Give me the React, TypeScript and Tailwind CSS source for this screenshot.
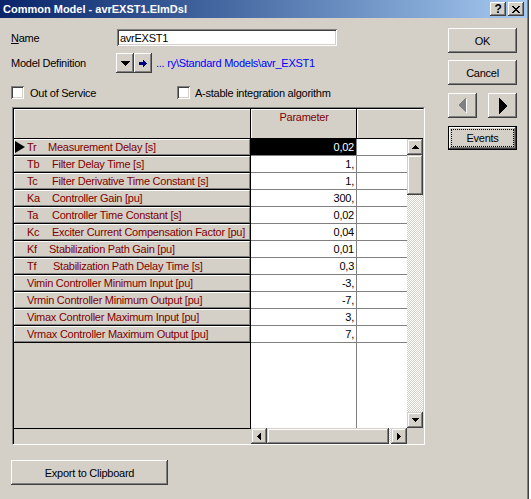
import React from "react";

const RAISED =
  "shadow-[inset_-1px_-1px_0_#404040,inset_1px_1px_0_#ffffff,inset_-2px_-2px_0_#808080]";
const SCROLLBTN =
  "shadow-[inset_-1px_-1px_0_#404040,inset_1px_1px_0_#d4d0c8,inset_-2px_-2px_0_#808080,inset_2px_2px_0_#ffffff]";
const SUNKEN =
  "shadow-[inset_1px_1px_0_#808080,inset_-1px_-1px_0_#ffffff,inset_2px_2px_0_#404040,inset_-2px_-2px_0_#d4d0c8]";
const CHECKER =
  "bg-[repeating-conic-gradient(#d4d0c8_0%_25%,#ffffff_0%_50%)] bg-[length:2px_2px]";

function Pix({ rows, color }: { rows: string[]; color: string }) {
  const h = rows.length;
  const w = rows[0].length;
  return (
    <svg width={w} height={h} shapeRendering="crispEdges">
      {rows.flatMap((r, y) =>
        [...r].map((c, x) =>
          c === "x" ? (
            <rect key={`${x}-${y}`} x={x} y={y} width={1} height={1} fill={color} />
          ) : null
        )
      )}
    </svg>
  );
}

const UP = ["...x...", "..xxx..", ".xxxxx.", "xxxxxxx"];
const DOWN = ["xxxxxxx", ".xxxxx.", "..xxx..", "...x..."];
const LEFT = ["...x", "..xx", ".xxx", "xxxx", ".xxx", "..xx", "...x"];
const RIGHT = ["x...", "xx..", "xxx.", "xxxx", "xxx.", "xx..", "x..."];
const DROP = ["xxxxxxxxx", ".xxxxxxx.", "..xxxxx..", "...xxx...", "....x...."];
const GOTO = ["....x...", "....xx..", "xxxxxxx.", "xxxxxxxx", "xxxxxxx.", "....xx..", "....x..."];
const CLOSE = ["xx....xx", ".xx..xx.", "..xxxx..", "...xx...", "..xxxx..", ".xx..xx.", "xx....xx"];

type Row = { sym: string; sw: string; desc: string; val: string };

const rows: Row[] = [
  { sym: "Tr", sw: "w-[21px]", desc: "Measurement Delay [s]", val: "0,02" },
  { sym: "Tb", sw: "w-[25px]", desc: "Filter Delay Time [s]", val: "1," },
  { sym: "Tc", sw: "w-[25px]", desc: "Filter Derivative Time Constant [s]", val: "1," },
  { sym: "Ka", sw: "w-[25px]", desc: "Controller Gain [pu]", val: "300," },
  { sym: "Ta", sw: "w-[25px]", desc: "Controller Time Constant [s]", val: "0,02" },
  { sym: "Kc", sw: "w-[25px]", desc: "Exciter Current Compensation Factor [pu]", val: "0,04" },
  { sym: "Kf", sw: "w-[22px]", desc: "Stabilization Path Gain [pu]", val: "0,01" },
  { sym: "Tf", sw: "w-[26px]", desc: "Stabilization Path Delay Time [s]", val: "0,3" },
  { sym: "", sw: "", desc: "Vimin Controller Minimum Input [pu]", val: "-3," },
  { sym: "", sw: "", desc: "Vrmin Controller Minimum Output [pu]", val: "-7," },
  { sym: "", sw: "", desc: "Vimax Controller Maximum Input [pu]", val: "3," },
  { sym: "", sw: "", desc: "Vrmax Controller Maximum Output [pu]", val: "7," },
];

function Button({ children, className }: { children: React.ReactNode; className: string }) {
  return (
    <div className={`flex items-center justify-center bg-[#d4d0c8] ${RAISED} ${className}`}>
      {children}
    </div>
  );
}

function Check({ label }: { label: string }) {
  return (
    <div className="flex items-center">
      <div className={`h-[13px] w-[13px] bg-white ${SUNKEN}`} />
      <span className="ml-[6px]">{label}</span>
    </div>
  );
}

function Grid() {
  return (
    <div className="ml-px mt-[8px] h-[338px] w-[413px] border border-b-white border-l-[#808080] border-r-white border-t-[#808080]">
      <div className="flex h-full flex-col border-l border-r border-t border-l-black border-r-[#d4d0c8] border-t-black">
        {/* header */}
        <div className="flex h-[30px] border-b border-black">
          <div className="w-[237px] border-r border-black">
            <div className="h-full border-l border-t border-white" />
          </div>
          <div className="w-[106px] border-r border-black">
            <div className="h-full border-l border-t border-white text-center text-[#800000]">
              Parameter
            </div>
          </div>
          <div className="flex-1">
            <div className="h-full border-l border-t border-white" />
          </div>
        </div>
        {/* body */}
        <div className="flex flex-1">
          <div className="flex w-[237px] flex-col">
            <div className="flex flex-1 flex-col border-b border-r border-black">
              {rows.map((r, i) => (
                <div key={i} className="h-[17px] border-b border-black">
                  <div className="flex h-[16px] items-center border-b border-l border-r border-t border-b-[#808080] border-l-white border-r-[#808080] border-t-white text-[#800000]">
                    <div className="flex w-[12px] items-center">
                      {i === 0 && (
                        <svg width="10" height="12">
                          <polygon points="0,0 10,6 0,12" fill="#000" />
                        </svg>
                      )}
                    </div>
                    {r.sym && <span className={r.sw}>{r.sym}</span>}
                    <span className="whitespace-nowrap">{r.desc}</span>
                  </div>
                </div>
              ))}
              <div className="flex-1" />
            </div>
            <div className="h-[15px]" />
          </div>
          <div className="flex flex-1 flex-col">
            <div className="flex flex-1">
              <div className="flex w-[156px] flex-col bg-white">
                {rows.map((r, i) => (
                  <div key={i} className="flex h-[17px] border-b border-[#808080]">
                    <div
                      className={`w-[106px] border-r border-[#808080] pr-[2px] pt-px text-right ${
                        i === 0 ? "bg-black text-white" : ""
                      }`}
                    >
                      {r.val}
                    </div>
                    <div className="flex-1" />
                  </div>
                ))}
                <div className="flex flex-1">
                  <div className="w-[106px] border-r border-[#808080]" />
                  <div className="flex-1" />
                </div>
              </div>
              <div className="flex w-[16px] flex-col">
                <div className={`flex h-[16px] items-center justify-center bg-[#d4d0c8] ${SCROLLBTN}`}>
                  <Pix rows={UP} color="#000" />
                </div>
                <div className={`h-[40px] bg-[#d4d0c8] ${SCROLLBTN}`} />
                <div className={`flex-1 ${CHECKER}`} />
                <div className={`flex h-[16px] items-center justify-center bg-[#d4d0c8] ${SCROLLBTN}`}>
                  <Pix rows={DOWN} color="#000" />
                </div>
              </div>
            </div>
            <div className="flex h-[16px]">
              <div className="flex w-[156px]">
                <div className={`flex w-[16px] items-center justify-center bg-[#d4d0c8] ${SCROLLBTN}`}>
                  <Pix rows={LEFT} color="#000" />
                </div>
                <div className={`w-[122px] bg-[#d4d0c8] ${SCROLLBTN}`} />
                <div className={`flex-1 ${CHECKER}`} />
                <div className={`flex w-[16px] items-center justify-center bg-[#d4d0c8] ${SCROLLBTN}`}>
                  <Pix rows={RIGHT} color="#000" />
                </div>
              </div>
              <div className="flex-1 bg-[#d4d0c8]" />
            </div>
          </div>
        </div>
      </div>
    </div>
  );
}

export default function App() {
  return (
    <div className="flex h-[499px] w-[531px] overflow-hidden bg-white font-['Liberation_Sans',Arial,sans-serif] text-[11px] leading-[14px] tracking-[-0.25px] text-black">
      <div className="flex h-full w-[527px] flex-col bg-[#d4d0c8]">
        {/* title bar */}
        <div className="flex h-[18px] items-center bg-linear-to-r from-[#0a246a] to-[#a6caf0] pl-[3px] pr-[3px]">
          <span className="flex-1 text-[11px] font-bold tracking-normal text-white">
            Common Model - avrEXST1.ElmDsl
          </span>
          <div className="flex gap-[2px]">
            <Button className="h-[14px] w-[16px]">
              <span className="text-[12px] font-bold leading-none">?</span>
            </Button>
            <Button className="h-[14px] w-[16px]">
              <Pix rows={CLOSE} color="#000" />
            </Button>
          </div>
        </div>

        <div className="flex flex-1">
          {/* left column */}
          <div className="flex w-[448px] flex-col pl-[11px]">
            <div className="mt-[11px] flex h-[17px] items-center">
              <span className="w-[106px]">
                <span className="underline">N</span>ame
              </span>
              <div className={`flex h-[17px] w-[220px] items-center bg-white pl-[3px] ${SUNKEN}`}>
                avrEXST1
              </div>
            </div>
            <div className="mt-[7px] flex h-[20px] items-center">
              <span className="w-[105px]">Model Definition</span>
              <Button className="h-[20px] w-[18px]">
                <Pix rows={DROP} color="#000" />
              </Button>
              <Button className="h-[20px] w-[18px]">
                <Pix rows={GOTO} color="#000080" />
              </Button>
              <span className="ml-[4px] text-[#0000ff]">... ry\Standard Models\avr_EXST1</span>
            </div>
            <div className="mt-[13px] flex h-[13px] items-center">
              <div className="w-[166px]">
                <Check label="Out of Service" />
              </div>
              <div className="flex items-center">
                <div className={`h-[13px] w-[13px] bg-white ${SUNKEN}`} />
                <span className="ml-[5px]">A-stable integration algorithm</span>
              </div>
            </div>
            <Grid />
            <Button className="mt-[15px] h-[25px] w-[157px]">Export to Clipboard</Button>
          </div>

          {/* right column */}
          <div className="flex w-[69px] flex-col">
            <Button className="mt-[10px] h-[25px] w-[69px]">OK</Button>
            <Button className="mt-[7px] h-[25px] w-[69px]">Cancel</Button>
            <div className="mt-[8px] flex h-[25px] justify-between">
              <Button className="h-[25px] w-[29px]">
                <svg width="10" height="18" shapeRendering="crispEdges">
                  <polygon points="9,1 1,9 9,17" fill="#ffffff" />
                  <polygon points="8,0 0,8 8,16" fill="#808080" />
                </svg>
              </Button>
              <Button className="h-[25px] w-[29px]">
                <svg width="8" height="16" shapeRendering="crispEdges">
                  <polygon points="0,0 8,8 0,16" fill="#000" />
                </svg>
              </Button>
            </div>
            <div className="mt-[8px] h-[24px] w-[69px] border border-black">
              <div className={`flex h-full p-[2px] bg-[#d4d0c8] ${RAISED}`}>
                <div className="flex flex-1 items-center justify-center border border-dotted border-black">
                  Events
                </div>
              </div>
            </div>
          </div>
        </div>
      </div>
      <div className="w-px bg-[#808080]" />
      <div className="w-px bg-[#404040]" />
    </div>
  );
}
